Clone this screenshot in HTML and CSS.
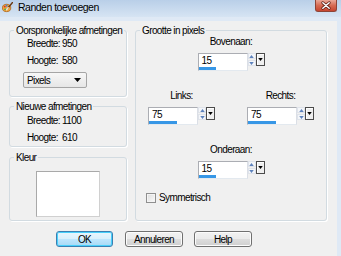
FILE: index.html
```html
<!DOCTYPE html>
<html lang="nl">
<head>
    <meta charset="UTF-8">
    <title>Randen toevoegen</title>
    <link rel="stylesheet" href="styles.css">
</head>
<body>

    <div class="window">
        <div class="titlebar">
            <svg class="app-icon" viewBox="0 0 12 12">
                <ellipse cx="5" cy="6.5" rx="4.6" ry="4" fill="#f0a43c" stroke="#a8621c" stroke-width="0.8"/>
                <circle cx="3" cy="5" r="1" fill="#d8302a"/>
                <circle cx="5" cy="4" r="1" fill="#3a7be0"/>
                <circle cx="3.4" cy="8" r="1" fill="#3aa83a"/>
                <path d="M11.5 0.5 L6 7" stroke="#6b3a14" stroke-width="1.6" stroke-linecap="round"/>
                <path d="M6.6 6.3 L5 8.4" stroke="#e8e0d0" stroke-width="1.8" stroke-linecap="round"/>
            </svg>
            <span class="title">Randen toevoegen</span>
            <button class="close" type="button">
                <svg viewBox="0 0 22 12">
                    <path d="M7.5 3 L14.5 9 M14.5 3 L7.5 9" stroke="#5a1e14" stroke-width="3.2" stroke-linecap="round"/>
                    <path d="M7.5 3 L14.5 9 M14.5 3 L7.5 9" stroke="#fff" stroke-width="1.6" stroke-linecap="round"/>
                </svg>
            </button>
        </div>

        <div class="dialog">
            <div class="columns">
                <div class="left-col">
                    <fieldset class="group group-orig">
                        <legend>Oorspronkelijke afmetingen</legend>
                        <div class="info-row"><span class="info-label">Breedte:</span><span>950</span></div>
                        <div class="info-row"><span class="info-label">Hoogte:</span><span>580</span></div>
                        <div class="select">
                            <span>Pixels</span>
                            <svg class="select-arrow" viewBox="0 0 7 4"><path d="M0 0 H7 L3.5 4 Z" fill="#000"/></svg>
                        </div>
                    </fieldset>

                    <fieldset class="group group-new">
                        <legend>Nieuwe afmetingen</legend>
                        <div class="info-row"><span class="info-label">Breedte:</span><span>1100</span></div>
                        <div class="info-row"><span class="info-label">Hoogte:</span><span>610</span></div>
                    </fieldset>

                    <fieldset class="group group-color">
                        <legend>Kleur</legend>
                        <div class="swatch"></div>
                    </fieldset>
                </div>

                <fieldset class="group group-size">
                    <legend>Grootte in pixels</legend>

                    <div class="spin-row">
                        <div class="spin-field">
                            <div class="spin-label">Bovenaan:</div>
                            <div class="spin">
                                <div class="spin-input"><span class="spin-value">15</span><div class="spin-bar" style="width: 37%"></div></div>
                                <div class="spin-arrows">
                                    <span class="arrow"><svg viewBox="0 0 6 4"><path d="M0 4 L3 0 L6 4 Z"/></svg></span>
                                    <span class="arrow"><svg viewBox="0 0 6 4"><path d="M0 0 L3 4 L6 0 Z"/></svg></span>
                                </div>
                                <div class="spin-drop"><svg viewBox="0 0 6 4"><path d="M0 0 H6 L3 4 Z"/></svg></div>
                            </div>
                        </div>
                    </div>

                    <div class="spin-row">
                        <div class="spin-field">
                            <div class="spin-label">Links:</div>
                            <div class="spin">
                                <div class="spin-input"><span class="spin-value">75</span><div class="spin-bar" style="width: 58%"></div></div>
                                <div class="spin-arrows">
                                    <span class="arrow"><svg viewBox="0 0 6 4"><path d="M0 4 L3 0 L6 4 Z"/></svg></span>
                                    <span class="arrow"><svg viewBox="0 0 6 4"><path d="M0 0 L3 4 L6 0 Z"/></svg></span>
                                </div>
                                <div class="spin-drop"><svg viewBox="0 0 6 4"><path d="M0 0 H6 L3 4 Z"/></svg></div>
                            </div>
                        </div>
                        <div class="spin-field">
                            <div class="spin-label">Rechts:</div>
                            <div class="spin">
                                <div class="spin-input"><span class="spin-value">75</span><div class="spin-bar" style="width: 58%"></div></div>
                                <div class="spin-arrows">
                                    <span class="arrow"><svg viewBox="0 0 6 4"><path d="M0 4 L3 0 L6 4 Z"/></svg></span>
                                    <span class="arrow"><svg viewBox="0 0 6 4"><path d="M0 0 L3 4 L6 0 Z"/></svg></span>
                                </div>
                                <div class="spin-drop"><svg viewBox="0 0 6 4"><path d="M0 0 H6 L3 4 Z"/></svg></div>
                            </div>
                        </div>
                    </div>

                    <div class="spin-row">
                        <div class="spin-field">
                            <div class="spin-label">Onderaan:</div>
                            <div class="spin">
                                <div class="spin-input"><span class="spin-value">15</span><div class="spin-bar" style="width: 37%"></div></div>
                                <div class="spin-arrows">
                                    <span class="arrow"><svg viewBox="0 0 6 4"><path d="M0 4 L3 0 L6 4 Z"/></svg></span>
                                    <span class="arrow"><svg viewBox="0 0 6 4"><path d="M0 0 L3 4 L6 0 Z"/></svg></span>
                                </div>
                                <div class="spin-drop"><svg viewBox="0 0 6 4"><path d="M0 0 H6 L3 4 Z"/></svg></div>
                            </div>
                        </div>
                    </div>

                    <label class="check"><span class="check-box"></span>Symmetrisch</label>
                </fieldset>
            </div>

            <div class="buttons">
                <button type="button" class="btn btn-default">OK</button>
                <button type="button" class="btn">Annuleren</button>
                <button type="button" class="btn">Help</button>
            </div>
        </div>
    </div>

</body>
</html>
```

FILE: styles.css
```css
* {
    box-sizing: border-box;
}

body {
    margin: 0;
    font-family: "Liberation Sans", Arial, sans-serif;
    font-size: 10px;
    letter-spacing: -0.6px;
    color: #000;
    background: #f0f0f0;
}

.window {
    width: 341px;
    height: 256px;
    overflow: hidden;
    background: #f0f0f0;
}

/* Title bar */
.titlebar {
    height: 17px;
    display: flex;
    align-items: center;
    padding: 0 4px 3px 2px;
    background: linear-gradient(#b9cfe8, #d6e4f3);
}

.app-icon {
    width: 11px;
    height: 11px;
    margin-right: 5px;
}

.title {
    flex: 1;
    font-size: 10.5px;
    letter-spacing: -0.5px;
}

.close {
    align-self: flex-start;
    width: 22px;
    height: 12px;
    padding: 0;
    border: 1px solid #8e4436;
    border-top: none;
    border-radius: 0 0 3px 3px;
    background: linear-gradient(#eaa898, #d66a52 50%, #c7452f);
}

.close svg {
    display: block;
    width: 20px;
    height: 11px;
}

/* Dialog body */
.dialog {
    height: 239px;
    border-top: 4px solid #dfe9f5;
    border-right: 4px solid #dfe9f5;
    padding: 4px 10px 0 9px;
}

.columns {
    display: flex;
    gap: 8px;
}

.left-col {
    width: 118px;
    display: flex;
    flex-direction: column;
}

.group {
    margin: 0;
    padding: 0;
    min-width: 0;
    border: 1px solid #d2dbe1;
    border-radius: 3px;
    box-shadow: 1px 1px 0 #fff;
}

.group legend {
    margin-left: 4px;
    padding: 0 2px;
    line-height: 11px;
}

.group-orig {
    height: 72px;
}

.group-new {
    height: 46px;
    margin-top: 4px;
    padding-top: 1px;
}

.group-color {
    height: 69px;
    margin-top: 5px;
}

.info-row {
    display: flex;
    align-items: center;
    height: 14px;
    margin-bottom: 3px;
    padding-left: 17px;
}

.info-label {
    width: 35px;
}

.select {
    width: 64px;
    height: 16px;
    margin: 5px 0 0 13px;
    padding: 0 5px 0 3px;
    display: flex;
    align-items: center;
    justify-content: space-between;
    border: 1px solid #a5a5a5;
    border-radius: 2px;
    background: linear-gradient(#f7f7f7, #e6e6e6);
}

.select-arrow {
    width: 7px;
    height: 4px;
}

.swatch {
    width: 64px;
    height: 46px;
    margin: 8px auto 0;
    background: #fff;
    border: 1px solid #a9a9a9;
    border-right-color: #d0d0d0;
    border-bottom-color: #d0d0d0;
}

/* Size group */
.group-size {
    width: 192px;
    height: 196px;
}

.spin-row {
    display: flex;
    justify-content: center;
    gap: 32px;
}

.spin-row + .spin-row {
    margin-top: 19px;
}

.spin-label {
    text-align: center;
    line-height: 12px;
    margin-bottom: 5px;
}

.spin {
    display: flex;
    align-items: flex-start;
    height: 18px;
}

.spin-input {
    width: 50px;
    height: 18px;
    display: flex;
    flex-direction: column;
    background: #fff;
    border: 1px solid #abadb3;
    border-right-color: #dbdfe6;
    border-bottom-color: #e3e9ef;
}

.spin-value {
    padding: 1px 3px 0;
    line-height: 11px;
}

.spin-bar {
    margin-top: auto;
    height: 3px;
    background: #3797e6;
}

.spin-arrows {
    width: 8px;
    display: flex;
    flex-direction: column;
    gap: 1px;
}

.arrow {
    height: 6px;
    display: flex;
    align-items: center;
    justify-content: center;
    background: #f4f6f9;
    border: 1px solid #dfe3ea;
}

.arrow svg {
    width: 5px;
    height: 3px;
    fill: #5d82bd;
}

.spin-drop {
    width: 9px;
    height: 13px;
    display: flex;
    align-items: center;
    justify-content: center;
    background: #efefef;
    border: 1px solid #4b4b4b;
    box-shadow: inset 1px 1px 0 #fff;
}

.spin-drop svg {
    width: 5px;
    height: 3px;
    fill: #000;
}

.check {
    display: flex;
    align-items: center;
    gap: 3px;
    height: 11px;
    margin: 13px 0 0 10px;
}

.check-box {
    width: 10px;
    height: 10px;
    border: 1px solid #8f8f8f;
    background: linear-gradient(135deg, #dcdcdc, #fafafa);
    box-shadow: inset 0 0 0 1px #f4f4f4;
}

/* Buttons */
.buttons {
    display: flex;
    gap: 11px;
    margin-top: 10px;
    padding-left: 47px;
}

.btn {
    width: 58px;
    height: 16px;
    padding: 0;
    font: inherit;
    letter-spacing: inherit;
    color: #000;
    border: 1px solid #707070;
    border-radius: 3px;
    background: linear-gradient(#f2f2f2 0%, #ebebeb 48%, #dddddd 52%, #cfcfcf 100%);
    box-shadow: inset 0 0 0 1px #fcfcfc;
}

.btn-default {
    width: 57px;
    margin-right: 1px;
    border-color: #3c7fb1;
    background: linear-gradient(#eaf6fd 0%, #d9f0fc 48%, #bee6fd 52%, #a7d9f5 100%);
    box-shadow: inset 0 0 0 1px #48d0fb;
}
```
